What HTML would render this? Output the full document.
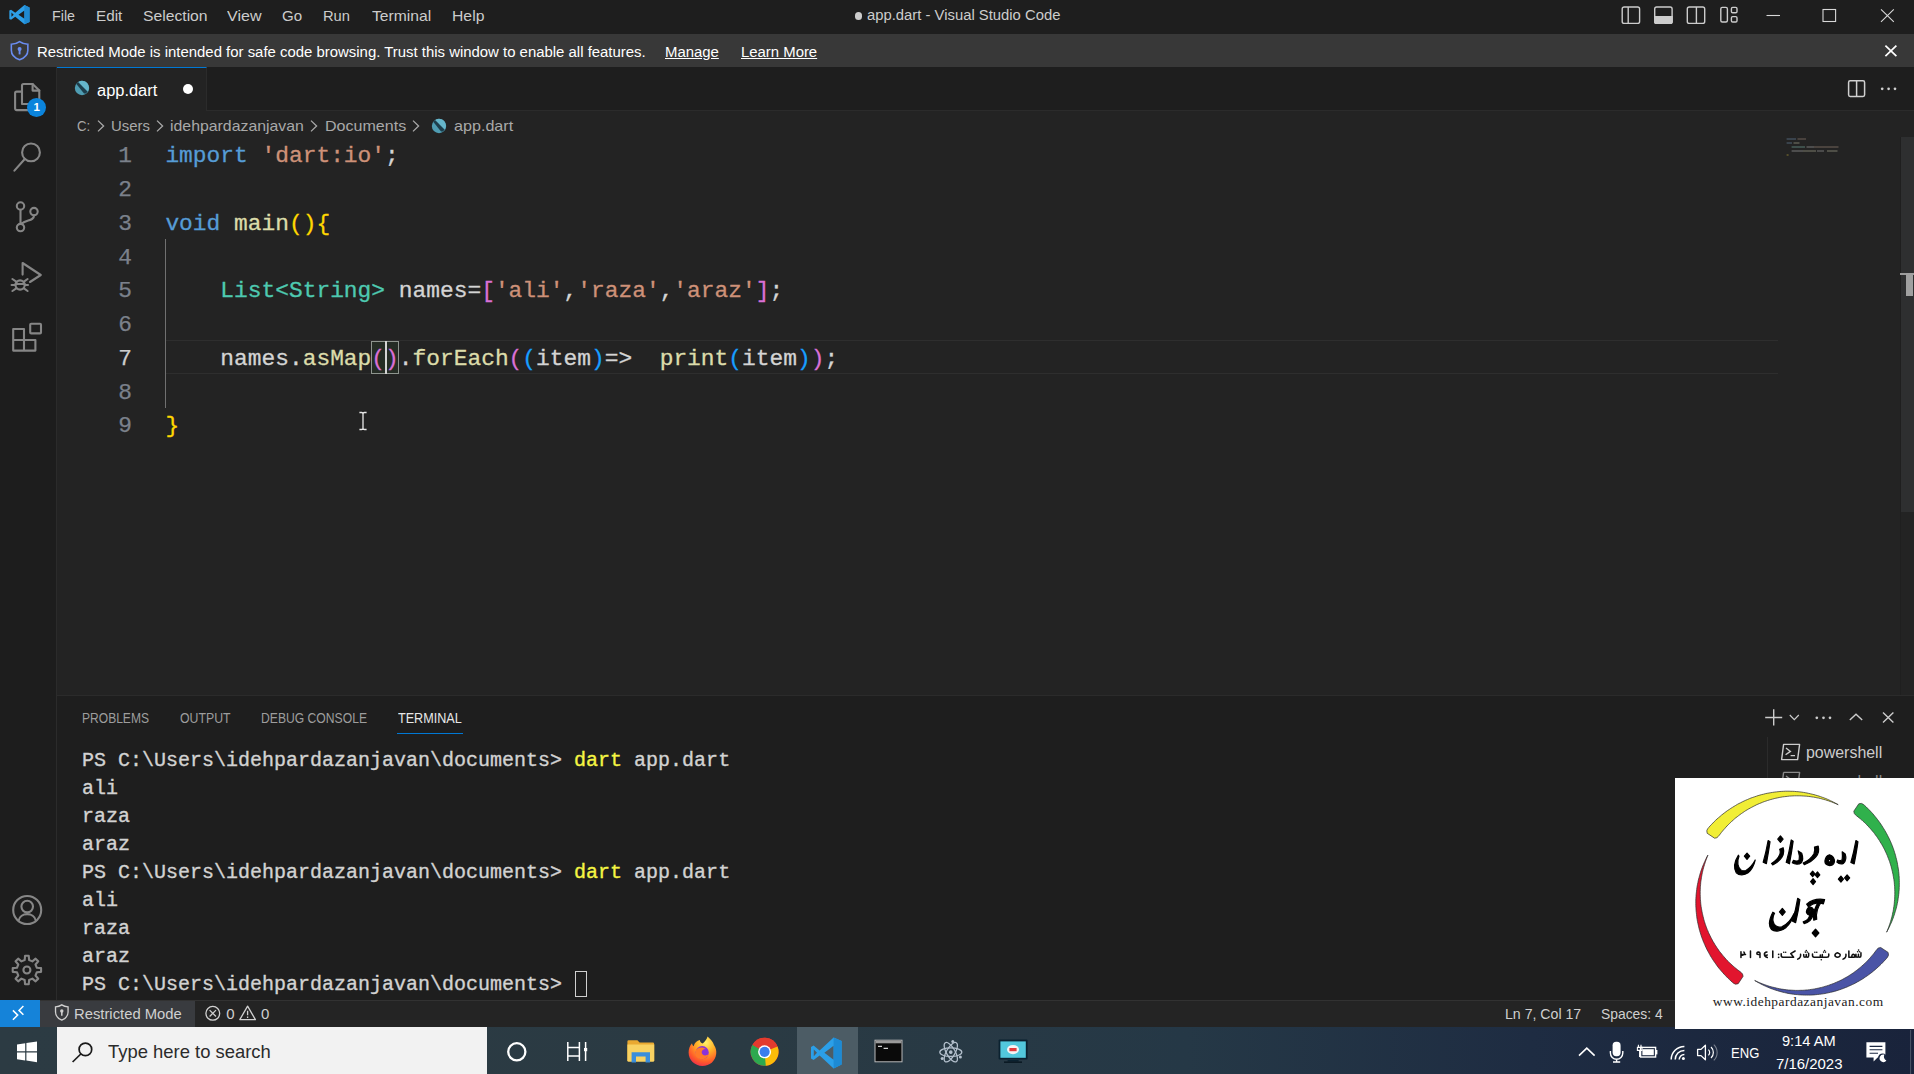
<!DOCTYPE html>
<html>
<head>
<meta charset="utf-8">
<title>app.dart - Visual Studio Code</title>
<style>
*{box-sizing:border-box;margin:0;padding:0}
html,body{width:1914px;height:1074px;overflow:hidden;background:#232323}
body{position:relative;font-family:"Liberation Sans",sans-serif;color:#cccccc}
.abs{position:absolute}
.t{position:absolute;white-space:pre;line-height:1}
/* title bar */
#titlebar{left:0;top:0;width:1914px;height:34px;background:#1e1e1e}
.menu{font-size:15px;color:#cccccc;top:8px}
/* banner */
#banner{left:0;top:34px;width:1914px;height:33px;background:#383838}
.bt{font-size:14.9px;color:#ffffff;top:44.7px}
/* activity bar */
#actbar{left:0;top:67px;width:57px;height:933px;background:#1d1d1d;border-right:1px solid #2b2b2b}
/* tabs */
#tabs{left:57px;top:67px;width:1857px;height:44px;background:#1e1e1e;border-bottom:1px solid #2b2b2b}
#tab{left:57px;top:67px;width:150px;height:44px;background:#232323;border-top:1.5px solid #0078d4;border-right:1px solid #2b2b2b}
/* editor */
#editor{left:57px;top:111px;width:1857px;height:584px;background:#232323}
.bc{font-size:15px;color:#a9a9a9;top:117.8px}
.ln{font-family:"Liberation Mono",monospace;font-size:22.85px;color:#7b818b;width:60px;text-align:right;left:72px;-webkit-text-stroke:.25px currentColor}
.code{font-family:"Liberation Mono",monospace;font-size:22.88px;color:#d4d4d4;left:165.4px;z-index:2;-webkit-text-stroke:.3px currentColor}
.k{color:#569cd6}.s{color:#ce9178}.f{color:#dcdcaa}.ty{color:#4ec9b0}
.b1{color:#ffd700}.b2{color:#da70d6}.b3{color:#179fff}
/* panel */
#panel{left:57px;top:695px;width:1857px;height:305px;background:#1e1e1e;border-top:1px solid #2b2b2b}
.pt{font-size:14.2px;color:#9d9d9d;top:710.6px}
.term{font-family:"Liberation Mono",monospace;font-size:20px;color:#d2d2d2;left:82px;-webkit-text-stroke:.35px currentColor}
.y{color:#f5f543}
/* status bar */
#status{left:0;top:1000px;width:1914px;height:27px;background:#242424;border-top:1px solid #323232}
.st{font-size:15px;color:#d0d0d0;top:1006.2px}
/* taskbar */
#taskbar{left:0;top:1027px;width:1914px;height:47px;background:linear-gradient(90deg,#2c3b43 0%,#2a3a43 40%,#253846 62%,#1e2c42 80%,#19233b 100%)}
</style>
</head>
<body>
<!-- TITLE BAR -->
<div id="titlebar" class="abs"></div>
<svg class="abs" style="left:7.6px;top:4px" width="22.9" height="21.4" viewBox="0 0 24 24" preserveAspectRatio="none"><path d="M17.2 1.2 L22.6 3.8 V20.2 L17.2 22.8 L7.6 14.2 L3.2 17.6 L1.4 16.7 V7.3 L3.2 6.4 L7.6 9.8 Z M17.2 7.4 L11 12 L17.2 16.6 Z M3.6 9.6 V14.4 L6 12 Z" fill="#2d9fe8" fill-rule="evenodd"/><path d="M17.2 1.2 L22.6 3.8 V20.2 L17.2 22.8 Z" fill="#1f8ad2"/></svg>
<span class="t menu" id="m1" style="left:51.5px;transform:scaleX(0.9515);transform-origin:0 0">File</span>
<span class="t menu" id="m2" style="left:95.8px;transform:scaleX(1.0170);transform-origin:0 0">Edit</span>
<span class="t menu" id="m3" style="left:142.8px;transform:scaleX(1.0467);transform-origin:0 0">Selection</span>
<span class="t menu" id="m4" style="left:226.8px;transform:scaleX(1.0698);transform-origin:0 0">View</span>
<span class="t menu" id="m5" style="left:281.9px;transform:scaleX(1.0042);transform-origin:0 0">Go</span>
<span class="t menu" id="m6" style="left:323.3px;transform:scaleX(0.9807);transform-origin:0 0">Run</span>
<span class="t menu" id="m7" style="left:371.6px;transform:scaleX(1.0443);transform-origin:0 0">Terminal</span>
<span class="t menu" id="m8" style="left:451.8px;transform:scaleX(1.0499);transform-origin:0 0">Help</span>
<span class="abs" style="left:854.5px;top:12.3px;width:7.4px;height:7.4px;border-radius:50%;background:#cccccc"></span>
<span class="t" id="wtitle" style="left:867px;top:8px;font-size:14.83px;color:#cccccc">app.dart - Visual Studio Code</span>
<svg class="abs" style="left:1610px;top:0" width="304" height="34" viewBox="1610 0 304 34" fill="none" stroke="#cccccc" stroke-width="1.4">
<rect x="1622.2" y="7" width="17.4" height="16.4" rx="2"/><line x1="1628.2" y1="7" x2="1628.2" y2="23.4"/>
<rect x="1654.7" y="7" width="17.4" height="16.4" rx="2"/><path d="M1654.7 16.8 H1672.1 V21.4 a2 2 0 0 1 -2 2 H1656.7 a2 2 0 0 1 -2 -2 Z" fill="#cccccc"/>
<rect x="1687.3" y="7" width="17.4" height="16.4" rx="2"/><line x1="1696.4" y1="7" x2="1696.4" y2="23.4"/>
<rect x="1720.8" y="7.4" width="6.6" height="14.6" rx="1.5"/><rect x="1731.4" y="7.4" width="5.6" height="5.4" rx="1.3"/><rect x="1731.4" y="16.6" width="5.6" height="5.4" rx="1.3"/>
<g stroke="#d8d8d8" stroke-width="1.1"><line x1="1766.5" y1="15.5" x2="1780" y2="15.5"/><rect x="1823" y="9.5" width="12.6" height="12"/><path d="M1881 9.3 L1893.8 21.8 M1893.8 9.3 L1881 21.8"/></g>
</svg>
<!-- BANNER -->
<div id="banner" class="abs"></div>
<svg class="abs" style="left:9.4px;top:40.2px" width="21.2" height="21.2" viewBox="0 0 20 20"><path d="M10 1.6 C7.6 3.4 5 4 2.2 4 V9.6 C2.2 14 5.4 17 10 18.6 C14.6 17 17.8 14 17.8 9.6 V4 C15 4 12.4 3.4 10 1.6 Z" fill="none" stroke="#6a8cf0" stroke-width="1.5"/><circle cx="10" cy="8.6" r="1.9" fill="#6a8cf0"/><rect x="9.1" y="9" width="1.8" height="4.6" fill="#6a8cf0"/></svg>
<span class="t bt" id="b1" style="left:37.2px;transform:scaleX(1.0019);transform-origin:0 0">Restricted Mode is intended for safe code browsing. Trust this window to enable all features.</span>
<span class="t bt" id="b2" style="left:665px;text-decoration:underline">Manage</span>
<span class="t bt" id="b3" style="left:741px;text-decoration:underline">Learn More</span>
<svg class="abs" style="left:1882px;top:42px" width="18" height="18" viewBox="0 0 18 18"><path d="M3.4 3.6 L14.4 14.2 M14.4 3.6 L3.4 14.2" stroke="#ffffff" stroke-width="1.7" fill="none"/></svg>
<!-- ACTIVITY BAR -->
<div id="actbar" class="abs"></div>
<svg class="abs" style="left:0;top:67px" width="57" height="320" viewBox="0 67 57 320" fill="none" stroke="#868686" stroke-width="2.1" stroke-linejoin="round" stroke-linecap="round">
<!-- files -->
<path d="M22 104 V85.5 a1.5 1.5 0 0 1 1.5 -1.5 H32.6 L39.3 90.6 V102.5 a1.5 1.5 0 0 1 -1.5 1.5 Z"/><path d="M32.6 84 V90.6 H39.3"/>
<path d="M22 91.6 H16.6 a1.5 1.5 0 0 0 -1.5 1.5 V108.6 a1.5 1.5 0 0 0 1.5 1.5 H28.5 a1.5 1.5 0 0 0 1.5 -1.5 V104"/>
<!-- search -->
<circle cx="31" cy="152.4" r="8.9"/><path d="M24.8 159 L14.4 170.6"/>
<!-- scm -->
<circle cx="20.5" cy="206" r="3.7"/><circle cx="34" cy="211.6" r="3.7"/><circle cx="20.5" cy="227.6" r="3.7"/><path d="M20.5 209.8 V223.8 M34 215.4 C34 221 27 219.5 21.6 223.6"/>
<!-- debug -->
<path d="M22.6 274.6 V263 L40.8 275 L30 282"/><circle cx="20.1" cy="285" r="4.6"/><path d="M15.6 284 H24.6 M11.6 285 H15.4 M24.8 285 H28 M12.4 279 L16.6 281.8 M27.6 279 L23.6 281.8 M12.4 291 L16.6 288.2 M27.6 291 L23.6 288.2"/>
<!-- extensions -->
<path d="M13.2 329 H24 V340 H35.4 V350.6 H13.2 Z M24 340 V350.6 M13.2 340 H24"/><rect x="30.2" y="323.8" width="10.8" height="9.6" rx="1"/>
</svg>
<span class="abs" style="left:26.8px;top:97.5px;width:19.4px;height:19.4px;border-radius:50%;background:#0b84dc"></span>
<span class="t" style="left:33.4px;top:101.6px;font-size:11.5px;font-weight:bold;color:#fff">1</span>
<svg class="abs" style="left:8px;top:890px" width="40" height="100" viewBox="8 890 40 100" fill="none" stroke="#868686" stroke-width="2.1" stroke-linejoin="round" stroke-linecap="round">
<circle cx="27.2" cy="910" r="14"/><circle cx="27.2" cy="906.6" r="5.8"/><path d="M18.6 920.6 C20 912 34.4 912 35.8 920.6"/>
<circle cx="26.9" cy="970" r="3.5"/>
<path id="gear" d="M24.67 960.05 L25.05 955.82 L28.75 955.82 L29.13 960.05 L32.36 961.39 L35.62 958.66 L38.24 961.28 L35.51 964.54 L36.85 967.77 L41.08 968.15 L41.08 971.85 L36.85 972.23 L35.51 975.46 L38.24 978.72 L35.62 981.34 L32.36 978.61 L29.13 979.95 L28.75 984.18 L25.05 984.18 L24.67 979.95 L21.44 978.61 L18.18 981.34 L15.56 978.72 L18.29 975.46 L16.95 972.23 L12.72 971.85 L12.72 968.15 L16.95 967.77 L18.29 964.54 L15.56 961.28 L18.18 958.66 L21.44 961.39 Z"/>
</svg>
<!-- TABS -->
<div id="tabs" class="abs"></div>
<div id="tab" class="abs"></div>
<svg class="abs" style="left:72.5px;top:79.2px" width="18" height="18" viewBox="0 0 18 18"><circle cx="9" cy="9" r="7.2" fill="#4f9db3"/><path d="M3.2 4.8 L5.2 2.9 L14.6 12.6 L13 14.6 L11 14.6 Z" fill="#1d3e4c"/><path d="M5.2 2.9 C8 1.2 12 1.6 14.4 4.2 C16.4 6.6 16.6 10 14.6 12.6 Z" fill="#74c6da" opacity=".6"/></svg>
<span class="t" id="tabname" style="left:97.1px;top:82.9px;font-size:15.6px;color:#ffffff;transform:scaleX(1.0536);transform-origin:0 0">app.dart</span>
<span class="abs" style="left:182.6px;top:83.6px;width:10.8px;height:10.8px;border-radius:50%;background:#ffffff"></span>
<svg class="abs" style="left:1840px;top:76px" width="70" height="26" viewBox="1840 76 70 26" fill="none" stroke="#d0d0d0" stroke-width="1.5">
<rect x="1848.6" y="80.8" width="16" height="15.6" rx="1.6"/><line x1="1856.6" y1="80.8" x2="1856.6" y2="96.4"/>
<g fill="#d0d0d0" stroke="none"><circle cx="1882.2" cy="88.8" r="1.35"/><circle cx="1888.6" cy="88.8" r="1.35"/><circle cx="1895" cy="88.8" r="1.35"/></g>
</svg>
<!-- EDITOR -->
<div id="editor" class="abs"></div>
<span class="t bc" id="c1" style="left:77.4px;transform:scaleX(0.8800);transform-origin:0 0">C:</span><svg class="abs" style="left:96px;top:118px" width="10" height="16" viewBox="0 0 10 16"><path d="M2 2.6 L7.6 8 L2 13.4" fill="none" stroke="#a9a9a9" stroke-width="1.3"/></svg>
<span class="t bc" id="c2" style="left:110.5px;transform:scaleX(0.9931);transform-origin:0 0">Users</span><svg class="abs" style="left:155px;top:118px" width="10" height="16" viewBox="0 0 10 16"><path d="M2 2.6 L7.6 8 L2 13.4" fill="none" stroke="#a9a9a9" stroke-width="1.3"/></svg>
<span class="t bc" id="c3" style="left:170.4px;transform:scaleX(1.0561);transform-origin:0 0">idehpardazanjavan</span><svg class="abs" style="left:309px;top:118px" width="10" height="16" viewBox="0 0 10 16"><path d="M2 2.6 L7.6 8 L2 13.4" fill="none" stroke="#a9a9a9" stroke-width="1.3"/></svg>
<span class="t bc" id="c4" style="left:325.2px;transform:scaleX(1.0702);transform-origin:0 0">Documents</span><svg class="abs" style="left:411px;top:118px" width="10" height="16" viewBox="0 0 10 16"><path d="M2 2.6 L7.6 8 L2 13.4" fill="none" stroke="#a9a9a9" stroke-width="1.3"/></svg>
<svg class="abs" style="left:430px;top:116.9px" width="18" height="18" viewBox="0 0 18 18"><circle cx="9" cy="9" r="7.2" fill="#4f9db3"/><path d="M3.2 4.8 L5.2 2.9 L14.6 12.6 L13 14.6 L11 14.6 Z" fill="#1d3e4c"/><path d="M5.2 2.9 C8 1.2 12 1.6 14.4 4.2 C16.4 6.6 16.6 10 14.6 12.6 Z" fill="#74c6da" opacity=".6"/></svg>
<span class="t bc" id="c5" style="left:454.2px;transform:scaleX(1.0754);transform-origin:0 0">app.dart</span>
<div class="abs" style="left:165px;top:339.6px;width:1613px;height:34.4px;border-top:1.4px solid #2e2e2e;border-bottom:1.4px solid #2e2e2e"></div>
<div class="abs" style="left:165px;top:239px;width:1.3px;height:169px;background:#707070"></div>
<span class="t ln" id="ln1" style="top:145.3px">1</span><span class="t code" id="cl1" style="top:145.3px"><span class="k">import</span> <span class="s">'dart:io'</span>;</span>
<span class="t ln" id="ln2" style="top:179.0px">2</span>
<span class="t ln" id="ln3" style="top:212.8px">3</span><span class="t code" id="cl3" style="top:212.8px"><span class="k">void</span> <span class="f">main</span><span class="b1">(){</span></span>
<span class="t ln" id="ln4" style="top:246.5px">4</span>
<span class="t ln" id="ln5" style="top:280.3px">5</span><span class="t code" id="cl5" style="top:280.3px">    <span class="ty">List&lt;String&gt;</span> names=<span class="b2">[</span><span class="s">'ali'</span>,<span class="s">'raza'</span>,<span class="s">'araz'</span><span class="b2">]</span>;</span>
<span class="t ln" id="ln6" style="top:314.0px">6</span>
<span class="t ln" id="ln7" style="top:347.7px;color:#cccccc">7</span><span class="t code" id="cl7" style="top:347.7px">    names.<span class="f">asMap</span><span class="b2">()</span>.<span class="f">forEach</span><span class="b2">(</span><span class="b3">(</span>item<span class="b3">)</span>=&gt;  <span class="f">print</span><span class="b3">(</span>item<span class="b3">)</span><span class="b2">)</span>;</span>
<span class="t ln" id="ln8" style="top:381.5px">8</span>
<span class="t ln" id="ln9" style="top:415.2px">9</span><span class="t code" id="cl9" style="top:415.2px"><span class="b1">}</span></span>

<div class="abs" style="left:370.9px;top:341px;width:15px;height:33px;border:1px solid #8e948e;background:#252c25"></div>
<div class="abs" style="left:384.9px;top:341px;width:14.4px;height:33px;border:1px solid #8e948e;background:#252c25"></div>
<div class="abs" style="left:385.1px;top:341.4px;width:2px;height:32.2px;background:#d4d4d4;z-index:3"></div>
<!-- minimap -->
<svg class="abs" style="left:1780px;top:135px" width="70" height="26" viewBox="1780 135 70 26" fill="none" stroke-width="1" opacity=".6">
<path d="M1786.600 139 H1796" stroke="#6f8fae"/><path d="M1797.500 139 H1806" stroke="#a08a7c"/>
<path d="M1786.600 143 H1792" stroke="#6f8fae"/><path d="M1793.500 143 H1799.500" stroke="#b4b49a"/>
<path d="M1791.600 147 H1805" stroke="#7fb8aa"/><path d="M1806.500 147 H1814" stroke="#b0b0b0"/><path d="M1814 147 H1838.500" stroke="#a8907f"/>
<path d="M1791.600 151 H1803" stroke="#b0b0b0"/><path d="M1803 151 H1816" stroke="#b4b49a"/><path d="M1817 151 H1824" stroke="#a8a8a8"/><path d="M1827 151 H1837.500" stroke="#b4b49a"/>
<path d="M1786.600 155 H1788.600" stroke="#c9b23c"/>
</svg>
<!-- scrollbar -->
<div class="abs" style="left:1899.6px;top:137px;width:1px;height:558px;background:#1f1f1f"></div>
<div class="abs" style="left:1901.400px;top:137.400px;width:12.600px;height:375px;background:#2e2f30"></div>
<div class="abs" style="left:1900px;top:273.200px;width:14px;height:2px;background:#9c9c9c"></div>
<div class="abs" style="left:1906.400px;top:273.200px;width:6.600px;height:22.800px;background:#a0a0a0"></div>
<!-- mouse I-beam -->
<svg class="abs" style="left:357px;top:410px" width="12" height="22" viewBox="0 0 12 22"><path d="M2.4 2.5 H4.6 Q6 2.5 6 4 Q6 2.5 7.4 2.5 H9.6 M2.4 19.5 H4.6 Q6 19.5 6 18 Q6 19.5 7.4 19.5 H9.6 M6 4 V18" fill="none" stroke="#e8e8e8" stroke-width="1.3"/></svg>
<!-- PANEL -->
<div id="panel" class="abs"></div>
<span class="t pt" id="p1" style="left:82px;transform:scaleX(0.8498);transform-origin:0 0">PROBLEMS</span>
<span class="t pt" id="p2" style="left:179.6px;transform:scaleX(0.8675);transform-origin:0 0">OUTPUT</span>
<span class="t pt" id="p3" style="left:260.8px;transform:scaleX(0.8563);transform-origin:0 0">DEBUG CONSOLE</span>
<span class="t pt" id="p4" style="left:398px;color:#e7e7e7;transform:scaleX(0.8894);transform-origin:0 0">TERMINAL</span>
<div class="abs" style="left:397px;top:732.6px;width:66px;height:1.4px;background:#0078d4"></div>
<svg class="abs" style="left:1760px;top:704px" width="150" height="28" viewBox="1760 704 150 28" fill="none" stroke="#cccccc" stroke-width="1.4">
<path d="M1765.2 717.5 H1782.2 M1773.7 709.2 V725.6"/>
<path d="M1789.8 715 L1794.3 719.6 L1798.8 715" stroke-width="1.2"/>
<g fill="#cccccc" stroke="none"><circle cx="1816.8" cy="717.8" r="1.35"/><circle cx="1823.5" cy="717.8" r="1.35"/><circle cx="1830" cy="717.8" r="1.35"/></g>
<path d="M1849.8 720 L1856 714.2 L1862.2 720"/>
<path d="M1883 712.4 L1893.4 722.4 M1893.4 712.4 L1883 722.4"/>
</svg>
<div class="abs" style="left:1767px;top:737px;width:1px;height:263px;background:#2b2b2b"></div>
<svg class="abs" style="left:1780px;top:742px" width="22" height="20" viewBox="0 0 22 20" fill="none" stroke="#cccccc" stroke-width="1.4"><path d="M3.6 2.4 H19.6 L17.6 17.6 H1.6 Z" stroke-linejoin="round"/><path d="M6 6 L10.4 9.4 L5.6 12.8 M10.6 13.6 H15"/></svg>
<span class="t" id="psh" style="left:1805.6px;top:745.4px;font-size:16px;color:#cccccc;transform:scaleX(0.9963);transform-origin:0 0">powershell</span>
<span class="t" id="psh2" style="left:1805.6px;top:773.8px;font-size:16px;color:#8a8a8a;transform:scaleX(0.9963);transform-origin:0 0">powershell</span>
<svg class="abs" style="left:1780px;top:769.6px" width="22" height="10" viewBox="0 0 22 10" fill="none" stroke="#8a8a8a" stroke-width="1.4"><path d="M3.6 2.4 H19.6 L18.6 10 M3.6 2.4 L2.6 10" stroke-linejoin="round"/><path d="M6 6 L10.4 9.4"/></svg>
<span class="t term" id="t1" style="top:751.1px">PS C:\Users\idehpardazanjavan\documents&gt; <span class="y">dart</span> app.dart</span>
<span class="t term" id="t2" style="top:779.1px">ali</span>
<span class="t term" id="t3" style="top:807.1px">raza</span>
<span class="t term" id="t4" style="top:835.1px">araz</span>
<span class="t term" id="t5" style="top:863.1px">PS C:\Users\idehpardazanjavan\documents&gt; <span class="y">dart</span> app.dart</span>
<span class="t term" id="t6" style="top:891.1px">ali</span>
<span class="t term" id="t7" style="top:919.1px">raza</span>
<span class="t term" id="t8" style="top:947.1px">araz</span>
<span class="t term" id="t9" style="top:975.1px">PS C:\Users\idehpardazanjavan\documents&gt; </span>
<div class="abs" style="left:574.5px;top:971.4px;width:12px;height:26px;border:1.2px solid #d0d0d0"></div>

<!-- STATUS -->
<div id="status" class="abs"></div>
<div class="abs" style="left:0;top:1000px;width:40px;height:27px;background:#1583d9"></div>
<svg class="abs" style="left:9px;top:1003px" width="22" height="22" viewBox="9 1003 22 22" fill="none" stroke="#ffffff" stroke-width="1.5"><path d="M23.4 1006 L19 1010.4 L23.4 1014.8"/><path d="M12.9 1010.4 L17.7 1015.1 L12.9 1019.8"/></svg>
<div class="abs" style="left:40px;top:1001px;width:154.6px;height:26px;background:#393b3f"></div>
<svg class="abs" style="left:52.6px;top:1003.4px" width="17.6" height="19" viewBox="0 0 18 20"><path d="M9 2 C7 3.4 4.8 4 2.4 4 V9.6 C2.4 13.6 5 16.4 9 18 C13 16.4 15.6 13.6 15.6 9.6 V4 C13.2 4 11 3.4 9 2 Z" fill="none" stroke="#d0d0d0" stroke-width="1.4"/><circle cx="9" cy="8.4" r="1.8" fill="#d0d0d0"/><rect x="8.2" y="9" width="1.6" height="4.4" fill="#d0d0d0"/></svg>
<span class="t st" id="s1" style="left:74.3px;transform:scaleX(0.9870);transform-origin:0 0">Restricted Mode</span>
<svg class="abs" style="left:204px;top:1004px" width="70" height="20" viewBox="204 1004 70 20" fill="none" stroke="#d0d0d0" stroke-width="1.3"><circle cx="212.8" cy="1013.3" r="6.9"/><path d="M209.6 1010.1 L216 1016.500 M216 1010.1 L209.6 1016.500"/><path d="M247.600 1006.200 L255.400 1019.600 H239.800 Z" stroke-linejoin="round"/><path d="M247.600 1010.800 V1015.200 M247.600 1016.600 V1018"/></svg>
<span class="t st" id="s2" style="left:226.2px">0</span>
<span class="t st" id="s3" style="left:260.9px">0</span>
<span class="t st" id="s4" style="left:1504.6px;transform:scaleX(0.9420);transform-origin:0 0">Ln 7, Col 17</span>
<span class="t st" id="s5" style="left:1601.2px;transform:scaleX(0.9248);transform-origin:0 0">Spaces: 4</span>

<!-- TASKBAR -->
<div id="taskbar" class="abs"></div>
<svg class="abs" style="left:0;top:1027px" width="57" height="47" viewBox="0 1027 57 47"><g fill="#ffffff"><path d="M17 1044.4 L25.2 1043.2 V1051.2 H17 Z"/><path d="M26.4 1043 L37 1041.4 V1051.2 H26.4 Z"/><path d="M17 1052.4 H25.2 V1060.4 L17 1059.2 Z"/><path d="M26.4 1052.4 H37 V1062.2 L26.4 1060.6 Z"/></g></svg>
<div class="abs" style="left:57px;top:1027px;width:430px;height:47px;background:#f2f2f2"></div>
<svg class="abs" style="left:68px;top:1038px" width="30" height="28" viewBox="68 1038 30 28" fill="none" stroke="#1a1a1a" stroke-width="1.7"><circle cx="85.4" cy="1049.4" r="6.3"/><path d="M80.8 1054 L72.6 1062"/></svg>
<span class="t" id="srch" style="left:107.6px;top:1042.4px;font-size:19px;color:#2b2b2b;transform:scaleX(0.9694);transform-origin:0 0">Type here to search</span>
<svg class="abs" style="left:487px;top:1027px" width="560" height="47" viewBox="487 1027 560 47">
<circle cx="516.8" cy="1051.8" r="8.6" fill="none" stroke="#ffffff" stroke-width="2.3"/>
<g fill="none" stroke="#ffffff" stroke-width="1.5"><path d="M567.8 1042 V1061 M579.4 1042 V1061 M567.8 1047.6 H579.4 M567.8 1056 H579.4 M585.6 1042 V1061"/><rect x="584" y="1048" width="3.2" height="3.2" fill="#ffffff" stroke="none"/></g>
<!-- explorer -->
<path d="M627.4 1041.6 a1.4 1.4 0 0 1 1.4 -1.4 H637.4 L639.6 1042.6 H652.8 a1.4 1.4 0 0 1 1.4 1.4 V1061 H627.4 Z" fill="#e9a931"/>
<path d="M627.4 1044.6 H654.2 V1060.6 a1.2 1.2 0 0 1 -1.2 1.2 H628.6 a1.2 1.2 0 0 1 -1.2 -1.2 Z" fill="#f8d262"/>
<path d="M631.6 1052.2 H650 V1062.4 H645.6 V1056.6 H636 V1062.4 H631.6 Z" fill="#3a8edb"/>
<!-- firefox -->
<defs><radialGradient id="ffg" cx="0.62" cy="0.2" r="0.95"><stop offset="0" stop-color="#fff36b"/><stop offset=".35" stop-color="#ffb127"/><stop offset=".7" stop-color="#ff5a2a"/><stop offset="1" stop-color="#e3175f"/></radialGradient></defs>
<path d="M707.6 1036.6 C711 1039.6 713 1042 714 1045 C716 1048 716.6 1051 716.2 1054 C715.4 1061 709.8 1066 702.4 1066 C694.6 1066 688.6 1060 688.6 1052.6 C688.6 1049 689.8 1045.6 692 1043.2 C692.2 1044.6 692.8 1045.6 693.6 1046.2 C694.6 1042.6 697 1040.6 699.8 1040 C700 1041.6 701 1043 702.6 1043.6 C704.6 1042 706.6 1039.6 707.6 1036.6 Z" fill="url(#ffg)"/>
<circle cx="702.2" cy="1052.6" r="6.6" fill="#8a33d8"/><path d="M696 1050 C698 1047 703 1046.6 706 1049 C703 1049 701 1051 702 1053.6 C703 1056 706.6 1056 708.6 1054 C707.6 1059 701 1061 697 1057.6 C695 1055.6 694.8 1052.6 696 1050 Z" fill="#ff7a2a"/>
<!-- chrome -->
<circle cx="764.6" cy="1051.8" r="14" fill="#e33b2e"/>
<path d="M764.6 1051.8 L752.5 1044.8 A14 14 0 0 0 765.8 1065.75 L771.6 1055.8 Z" fill="#2da94f"/>
<path d="M764.6 1051.8 L765.8 1065.75 A14 14 0 0 0 777.5 1046.4 H764.6 Z" fill="#fbbc09"/>
<path d="M764.6 1051.8 L777.5 1046.4 A14 14 0 0 0 752.5 1044.8 Z" fill="#e33b2e"/>
<circle cx="764.6" cy="1051.8" r="6.5" fill="#ffffff"/><circle cx="764.6" cy="1051.8" r="5.1" fill="#3b7ded"/>
<!-- vscode active -->
<rect x="797" y="1027" width="61" height="47" fill="#4c5c65"/>
<path d="M833.6 1037.4 L841.6 1041 V1064.6 L833.6 1068.4 L819.6 1055.4 L813.6 1060 L811 1058.6 V1047 L813.6 1045.6 L819.6 1050.4 Z M833.6 1045.8 L824.4 1052.8 L833.6 1059.8 Z M813.8 1049.6 V1056.2 L817 1052.8 Z" fill="#2b9fe8" fill-rule="evenodd"/><path d="M833.6 1037.4 L841.6 1041 V1064.6 L833.6 1068.4 Z" fill="#1d8ad4"/>
<!-- cmd -->
<rect x="875" y="1040.2" width="27" height="21.6" fill="#0a0a0a" stroke="#b9b9b9" stroke-width="1"/><rect x="875.5" y="1040.7" width="26" height="2.6" fill="#9a9a9a"/><path d="M878 1046.4 H882 M883.6 1048.4 H888" stroke="#d0d0d0" stroke-width="1.1"/>
<!-- atom -->
<g fill="none" stroke="#b4c0cd" stroke-width="1.25" transform="translate(950.8 1052.2)"><ellipse rx="11" ry="4.3"/><ellipse rx="11" ry="4.3" transform="rotate(60)"/><ellipse rx="11" ry="4.3" transform="rotate(120)"/><circle r="1.2" fill="#b4c0cd"/><circle cx="2" cy="-10.6" r="1.5" fill="#b4c0cd" stroke="none"/><circle cx="-8.6" cy="6.4" r="1.5" fill="#b4c0cd" stroke="none"/><circle cx="9.6" cy="4.8" r="1.5" fill="#b4c0cd" stroke="none"/></g>
<!-- monitor rec -->
<rect x="998.6" y="1039.6" width="29" height="20" rx="1" fill="#0b2230"/><rect x="1000.4" y="1041.4" width="25.4" height="16.4" fill="#52c8dc"/><rect x="1007.6" y="1060" width="11" height="1.6" fill="#0b2230"/><rect x="1004" y="1061.4" width="18" height="1.6" fill="#0b1a24"/>
<ellipse cx="1013" cy="1049.6" rx="6" ry="4.6" fill="#f4f4f4"/><rect x="1009.4" y="1048" width="7.2" height="3.2" fill="#e23a3a"/>
</svg>
<!-- tray -->
<svg class="abs" style="left:1570px;top:1030px" width="344" height="44" viewBox="1570 1030 344 44" fill="none" stroke="#ffffff" stroke-width="1.4">
<path d="M1579 1055.6 L1586.8 1048.2 L1594.6 1055.6" stroke-width="1.6"/>
<rect x="1612.6" y="1041.8" width="8" height="14.4" rx="3.6" fill="#ffffff" stroke="none"/><path d="M1610.4 1051 V1053 a6.2 6.2 0 0 0 12.4 0 V1051 M1616.6 1059.2 V1062 M1613 1062 H1620.2"/>
<rect x="1640.6" y="1047.4" width="15" height="9.6" fill="none"/><rect x="1642.4" y="1049.2" width="11.4" height="6" fill="#ffffff" stroke="none"/><rect x="1655.6" y="1050" width="1.8" height="4.4" fill="#ffffff" stroke="none"/><path d="M1638.4 1044.8 V1047 M1641 1044.8 V1047 M1637.4 1047.4 H1642 V1050.4 H1637.4 Z M1639.6 1050.6 V1057" stroke-width="1.1"/>
<path d="M1671.2 1059.6 A13.2 13.2 0 0 1 1684.4 1046.4 M1675.2 1059.6 A9.2 9.2 0 0 1 1684.4 1050.4 M1679.2 1059.6 A5.2 5.2 0 0 1 1684.4 1054.4" stroke-width="1.5"/><circle cx="1683.4" cy="1058.6" r="1.5" fill="#ffffff" stroke="none"/>
<path d="M1697.6 1049.4 H1701 L1705.4 1045.2 V1059.8 L1701 1055.6 H1697.6 Z" stroke-linejoin="round" stroke-width="1.3"/><path d="M1708.4 1049.6 a4 4 0 0 1 0 5.8 M1711 1047 a7.6 7.6 0 0 1 0 11" stroke-width="1.2"/><path d="M1713.8 1044.6 a11 11 0 0 1 0 15.8" stroke-width="1.1" opacity=".4"/>
<path d="M1866.4 1042.2 H1885.4 V1057.6 H1877.6 L1873.6 1061.6 V1057.6 H1866.4 Z" fill="#ffffff" stroke="none"/><path d="M1869.6 1046.4 H1882.4 M1869.6 1049.8 H1882.4 M1869.6 1053.2 H1878" stroke="#1b2740" stroke-width="1.1"/><circle cx="1882.6" cy="1058" r="4.6" fill="#1b2740" stroke="none"/><path d="M1884.4 1054.6 a3.8 3.8 0 1 0 2 6 a4.4 4.4 0 0 1 -2 -6 Z" fill="#ffffff" stroke="none"/>
<path d="M1910.6 1030 V1074" stroke="#4a5568" stroke-width="1"/>
</svg>
<span class="t" id="eng" style="left:1730.5px;top:1045.5px;font-size:14.6px;color:#ffffff;transform:scaleX(0.8949);transform-origin:0 0">ENG</span>
<span class="t" id="tm1" style="left:1782px;top:1033.6px;font-size:14.6px;color:#ffffff;transform:scaleX(1.0010);transform-origin:0 0">9:14 AM</span>
<span class="t" id="tm2" style="left:1775.5px;top:1057.2px;font-size:14.6px;color:#ffffff;transform:scaleX(1.0241);transform-origin:0 0">7/16/2023</span>

<!-- LOGO -->
<div id="logo" class="abs" style="left:1674.6px;top:777.8px;width:239.4px;height:251.6px;background:#ffffff"></div>
<svg class="abs" style="left:1675px;top:778px" width="239" height="250" viewBox="1675 778 239 250">
<path d="M1707.2 833.3 L1706.8 830.7 L1707.6 828.9 L1708.8 827.4 L1710.1 825.9 L1711.5 824.5 L1712.8 823.1 L1714.2 821.7 L1715.6 820.3 L1717.0 819.0 L1718.5 817.7 L1720.0 816.5 L1721.4 815.2 L1723.0 814.0 L1724.5 812.8 L1726.0 811.7 L1727.6 810.5 L1729.2 809.5 L1730.8 808.4 L1732.4 807.4 L1734.0 806.4 L1735.7 805.4 L1737.3 804.4 L1739.0 803.5 L1740.7 802.7 L1742.4 801.8 L1744.1 801.0 L1745.8 800.2 L1747.5 799.5 L1749.3 798.7 L1751.0 798.0 L1752.8 797.4 L1754.6 796.8 L1756.4 796.2 L1758.1 795.6 L1759.9 795.1 L1761.7 794.6 L1763.5 794.2 L1765.3 793.7 L1767.2 793.3 L1769.0 793.0 L1770.8 792.7 L1772.6 792.4 L1774.5 792.1 L1776.3 791.9 L1778.1 791.7 L1779.9 791.5 L1781.8 791.4 L1783.6 791.3 L1785.4 791.2 L1787.2 791.2 L1789.1 791.2 L1790.9 791.3 L1792.7 791.3 L1794.5 791.4 L1796.3 791.6 L1798.1 791.7 L1799.9 791.9 L1801.7 792.1 L1803.5 792.4 L1805.2 792.7 L1807.0 793.0 L1808.7 793.4 L1810.5 793.8 L1812.2 794.2 L1813.9 794.6 L1815.6 795.1 L1817.3 795.6 L1819.0 796.1 L1820.7 796.7 L1822.4 797.3 L1824.0 797.9 L1825.7 798.5 L1827.3 799.2 L1828.9 799.9 L1830.5 800.7 L1832.0 801.4 L1833.6 802.2 L1835.1 803.0 L1836.7 803.8 L1838.2 804.7 L1838.2 804.7 L1836.6 804.0 L1835.0 803.3 L1833.4 802.7 L1831.8 802.0 L1830.2 801.5 L1828.6 800.9 L1826.9 800.4 L1825.3 799.8 L1823.6 799.4 L1821.9 798.9 L1820.3 798.5 L1818.6 798.1 L1816.9 797.8 L1815.2 797.4 L1813.5 797.1 L1811.8 796.9 L1810.1 796.6 L1808.4 796.4 L1806.7 796.2 L1805.0 796.1 L1803.2 796.0 L1801.5 795.9 L1799.8 795.8 L1798.1 795.8 L1796.4 795.8 L1794.6 795.8 L1792.9 795.9 L1791.2 796.0 L1789.5 796.1 L1787.8 796.3 L1786.0 796.5 L1784.3 796.7 L1782.6 796.9 L1780.9 797.2 L1779.2 797.5 L1777.5 797.9 L1775.9 798.2 L1774.2 798.6 L1772.5 799.1 L1770.8 799.5 L1769.2 800.0 L1767.5 800.5 L1765.9 801.1 L1764.3 801.6 L1762.7 802.2 L1761.1 802.9 L1759.5 803.5 L1757.9 804.2 L1756.3 804.9 L1754.8 805.7 L1753.2 806.5 L1751.7 807.3 L1750.2 808.1 L1748.7 808.9 L1747.2 809.8 L1745.7 810.7 L1744.3 811.6 L1742.9 812.6 L1741.4 813.6 L1740.0 814.6 L1738.7 815.6 L1737.3 816.7 L1735.9 817.7 L1734.6 818.8 L1733.3 820.0 L1732.0 821.1 L1730.8 822.3 L1729.5 823.5 L1728.3 824.7 L1727.1 825.9 L1725.9 827.2 L1724.8 828.5 L1723.6 829.8 L1722.5 831.1 L1721.4 832.4 L1720.4 833.8 L1719.3 835.2 L1718.2 836.5 L1716.9 837.7 L1714.6 838.2 Z" fill="#f1ee36" stroke="#2a2a2a" stroke-width="0.7" stroke-linejoin="round"/>
<path d="M1858.8 803.8 L1861.4 803.4 L1863.2 804.3 L1864.7 805.5 L1866.1 806.8 L1867.4 808.1 L1868.8 809.5 L1870.1 810.8 L1871.4 812.2 L1872.7 813.6 L1873.9 815.1 L1875.1 816.5 L1876.3 818.0 L1877.5 819.5 L1878.6 821.0 L1879.7 822.5 L1880.8 824.1 L1881.8 825.6 L1882.8 827.2 L1883.8 828.8 L1884.8 830.4 L1885.7 832.0 L1886.6 833.6 L1887.5 835.3 L1888.3 836.9 L1889.2 838.6 L1889.9 840.2 L1890.7 841.9 L1891.4 843.6 L1892.1 845.3 L1892.8 847.1 L1893.4 848.8 L1894.0 850.5 L1894.5 852.2 L1895.1 854.0 L1895.6 855.7 L1896.0 857.5 L1896.5 859.3 L1896.9 861.0 L1897.3 862.8 L1897.6 864.6 L1897.9 866.4 L1898.2 868.1 L1898.5 869.9 L1898.7 871.7 L1898.9 873.5 L1899.0 875.3 L1899.2 877.1 L1899.2 878.8 L1899.3 880.6 L1899.3 882.4 L1899.3 884.2 L1899.3 885.9 L1899.2 887.7 L1899.2 889.5 L1899.0 891.2 L1898.9 893.0 L1898.7 894.7 L1898.5 896.5 L1898.2 898.2 L1898.0 899.9 L1897.7 901.7 L1897.3 903.4 L1897.0 905.1 L1896.6 906.8 L1896.2 908.5 L1895.7 910.1 L1895.2 911.8 L1894.7 913.4 L1894.2 915.1 L1893.6 916.7 L1893.1 918.3 L1892.4 919.9 L1891.8 921.5 L1891.1 923.1 L1890.4 924.6 L1889.7 926.2 L1889.0 927.7 L1888.2 929.2 L1887.4 930.7 L1886.6 932.2 L1886.6 932.2 L1887.3 930.7 L1887.9 929.1 L1888.5 927.5 L1889.1 926.0 L1889.6 924.4 L1890.2 922.8 L1890.7 921.2 L1891.1 919.6 L1891.6 917.9 L1892.0 916.3 L1892.4 914.7 L1892.7 913.0 L1893.1 911.4 L1893.4 909.7 L1893.6 908.1 L1893.9 906.4 L1894.1 904.7 L1894.3 903.1 L1894.4 901.4 L1894.6 899.7 L1894.7 898.0 L1894.7 896.4 L1894.8 894.7 L1894.8 893.0 L1894.8 891.3 L1894.7 889.6 L1894.7 888.0 L1894.6 886.3 L1894.4 884.6 L1894.3 882.9 L1894.1 881.3 L1893.9 879.6 L1893.6 877.9 L1893.3 876.3 L1893.0 874.6 L1892.7 873.0 L1892.3 871.3 L1891.9 869.7 L1891.5 868.1 L1891.1 866.4 L1890.6 864.8 L1890.1 863.2 L1889.6 861.6 L1889.0 860.0 L1888.4 858.5 L1887.8 856.9 L1887.2 855.3 L1886.5 853.8 L1885.8 852.3 L1885.1 850.8 L1884.4 849.2 L1883.6 847.8 L1882.8 846.3 L1882.0 844.8 L1881.1 843.4 L1880.2 841.9 L1879.4 840.5 L1878.4 839.1 L1877.5 837.7 L1876.5 836.3 L1875.5 835.0 L1874.5 833.6 L1873.5 832.3 L1872.4 831.0 L1871.3 829.7 L1870.2 828.4 L1869.1 827.2 L1867.9 826.0 L1866.8 824.8 L1865.6 823.6 L1864.4 822.4 L1863.1 821.3 L1861.9 820.1 L1860.6 819.0 L1859.3 818.0 L1858.0 816.9 L1856.7 815.9 L1855.4 814.8 L1854.3 813.5 L1853.8 811.2 Z" fill="#30b14c" stroke="#2a2a2a" stroke-width="0.7" stroke-linejoin="round"/>
<path d="M1888.1 952.4 L1888.5 955.1 L1887.7 956.9 L1886.5 958.5 L1885.1 960.0 L1883.8 961.4 L1882.4 962.9 L1881.0 964.3 L1879.6 965.7 L1878.1 967.0 L1876.6 968.4 L1875.1 969.7 L1873.6 970.9 L1872.1 972.2 L1870.5 973.4 L1868.9 974.6 L1867.4 975.7 L1865.7 976.8 L1864.1 977.9 L1862.5 979.0 L1860.8 980.0 L1859.1 981.0 L1857.4 981.9 L1855.7 982.9 L1854.0 983.8 L1852.3 984.6 L1850.5 985.4 L1848.7 986.2 L1847.0 987.0 L1845.2 987.7 L1843.4 988.4 L1841.6 989.1 L1839.8 989.7 L1838.0 990.3 L1836.1 990.9 L1834.3 991.4 L1832.5 991.9 L1830.6 992.3 L1828.8 992.7 L1826.9 993.1 L1825.1 993.5 L1823.2 993.8 L1821.3 994.1 L1819.5 994.3 L1817.6 994.5 L1815.7 994.7 L1813.9 994.9 L1812.0 995.0 L1810.1 995.1 L1808.3 995.1 L1806.4 995.1 L1804.5 995.1 L1802.7 995.0 L1800.8 994.9 L1799.0 994.8 L1797.2 994.6 L1795.3 994.5 L1793.5 994.2 L1791.7 994.0 L1789.9 993.7 L1788.1 993.4 L1786.3 993.0 L1784.5 992.6 L1782.7 992.2 L1781.0 991.7 L1779.2 991.3 L1777.5 990.7 L1775.7 990.2 L1774.0 989.6 L1772.3 989.0 L1770.6 988.4 L1769.0 987.7 L1767.3 987.0 L1765.7 986.3 L1764.1 985.6 L1762.5 984.8 L1760.9 984.0 L1759.3 983.1 L1757.7 982.3 L1756.2 981.4 L1754.7 980.5 L1754.7 980.5 L1756.3 981.2 L1757.9 982.0 L1759.5 982.7 L1761.1 983.3 L1762.8 984.0 L1764.4 984.6 L1766.1 985.2 L1767.7 985.7 L1769.4 986.3 L1771.1 986.8 L1772.8 987.2 L1774.5 987.6 L1776.2 988.0 L1777.9 988.4 L1779.7 988.8 L1781.4 989.1 L1783.1 989.3 L1784.9 989.6 L1786.6 989.8 L1788.4 990.0 L1790.1 990.1 L1791.9 990.2 L1793.7 990.3 L1795.4 990.4 L1797.2 990.4 L1798.9 990.4 L1800.7 990.3 L1802.4 990.3 L1804.2 990.2 L1806.0 990.0 L1807.7 989.9 L1809.5 989.7 L1811.2 989.4 L1812.9 989.2 L1814.7 988.9 L1816.4 988.5 L1818.1 988.2 L1819.8 987.8 L1821.6 987.4 L1823.3 986.9 L1824.9 986.4 L1826.6 985.9 L1828.3 985.4 L1830.0 984.8 L1831.6 984.2 L1833.3 983.6 L1834.9 982.9 L1836.5 982.2 L1838.1 981.5 L1839.7 980.8 L1841.3 980.0 L1842.9 979.2 L1844.4 978.3 L1845.9 977.5 L1847.5 976.6 L1849.0 975.7 L1850.4 974.7 L1851.9 973.8 L1853.4 972.8 L1854.8 971.7 L1856.2 970.7 L1857.6 969.6 L1859.0 968.5 L1860.3 967.4 L1861.7 966.2 L1863.0 965.1 L1864.3 963.9 L1865.5 962.7 L1866.8 961.4 L1868.0 960.2 L1869.2 958.9 L1870.4 957.6 L1871.5 956.2 L1872.7 954.9 L1873.8 953.5 L1874.9 952.1 L1875.9 950.7 L1877.0 949.3 L1878.3 948.1 L1880.7 947.5 Z" fill="#4a54a6" stroke="#2a2a2a" stroke-width="0.7" stroke-linejoin="round"/>
<path d="M1738.2 983.7 L1735.6 984.2 L1733.8 983.4 L1732.3 982.2 L1730.9 980.9 L1729.5 979.6 L1728.1 978.3 L1726.7 976.9 L1725.4 975.5 L1724.1 974.2 L1722.8 972.7 L1721.5 971.3 L1720.3 969.8 L1719.1 968.4 L1717.9 966.9 L1716.8 965.4 L1715.7 963.8 L1714.6 962.3 L1713.5 960.7 L1712.5 959.2 L1711.5 957.6 L1710.5 956.0 L1709.6 954.3 L1708.7 952.7 L1707.8 951.1 L1706.9 949.4 L1706.1 947.7 L1705.3 946.0 L1704.6 944.3 L1703.8 942.6 L1703.1 940.9 L1702.5 939.2 L1701.8 937.5 L1701.2 935.7 L1700.7 934.0 L1700.1 932.2 L1699.6 930.5 L1699.1 928.7 L1698.7 926.9 L1698.3 925.1 L1697.9 923.4 L1697.5 921.6 L1697.2 919.8 L1696.9 918.0 L1696.7 916.2 L1696.5 914.4 L1696.3 912.6 L1696.1 910.8 L1696.0 909.0 L1695.9 907.2 L1695.8 905.4 L1695.8 903.7 L1695.8 901.9 L1695.8 900.1 L1695.9 898.3 L1696.0 896.5 L1696.1 894.8 L1696.3 893.0 L1696.5 891.2 L1696.7 889.5 L1696.9 887.7 L1697.2 886.0 L1697.5 884.3 L1697.9 882.6 L1698.2 880.8 L1698.6 879.1 L1699.1 877.4 L1699.5 875.8 L1700.0 874.1 L1700.5 872.4 L1701.0 870.8 L1701.6 869.2 L1702.2 867.5 L1702.8 865.9 L1703.5 864.3 L1704.2 862.7 L1704.9 861.2 L1705.6 859.6 L1706.3 858.1 L1707.1 856.6 L1707.9 855.1 L1707.9 855.1 L1707.3 856.6 L1706.7 858.2 L1706.1 859.8 L1705.5 861.4 L1705.0 863.0 L1704.5 864.6 L1704.0 866.3 L1703.5 867.9 L1703.1 869.5 L1702.7 871.2 L1702.3 872.8 L1702.0 874.5 L1701.7 876.1 L1701.4 877.8 L1701.2 879.5 L1700.9 881.2 L1700.7 882.9 L1700.6 884.5 L1700.4 886.2 L1700.3 887.9 L1700.3 889.6 L1700.2 891.3 L1700.2 893.0 L1700.2 894.7 L1700.3 896.4 L1700.3 898.1 L1700.4 899.8 L1700.6 901.5 L1700.7 903.1 L1700.9 904.8 L1701.1 906.5 L1701.4 908.2 L1701.7 909.9 L1702.0 911.5 L1702.3 913.2 L1702.7 914.8 L1703.1 916.5 L1703.5 918.1 L1703.9 919.8 L1704.4 921.4 L1704.9 923.0 L1705.4 924.6 L1706.0 926.2 L1706.6 927.8 L1707.2 929.4 L1707.9 930.9 L1708.5 932.5 L1709.2 934.0 L1710.0 935.6 L1710.7 937.1 L1711.5 938.6 L1712.3 940.1 L1713.1 941.6 L1714.0 943.0 L1714.9 944.5 L1715.8 945.9 L1716.7 947.3 L1717.7 948.7 L1718.6 950.1 L1719.6 951.5 L1720.7 952.8 L1721.7 954.1 L1722.8 955.4 L1723.9 956.7 L1725.0 958.0 L1726.1 959.3 L1727.3 960.5 L1728.5 961.7 L1729.7 962.9 L1730.9 964.1 L1732.2 965.2 L1733.4 966.3 L1734.7 967.4 L1736.0 968.5 L1737.3 969.6 L1738.7 970.6 L1740.0 971.6 L1741.4 972.7 L1742.5 974.0 L1743.1 976.3 Z" fill="#e2152e" stroke="#2a2a2a" stroke-width="0.7" stroke-linejoin="round"/>
</svg>
<svg class="abs" style="left:1724px;top:830px" width="150" height="115" viewBox="0 0 1401 1074" fill="#000" stroke="#000" stroke-width="11" stroke-linejoin="round">
<!-- line 1 -->
<path d="M135 235 C100 290 88 355 115 400 C140 425 190 425 225 400 C262 370 282 325 292 280 C272 318 245 352 205 378 C170 390 138 370 130 320 C128 290 132 262 140 245 Z"/>
<path d="M215 215 L240 245 L215 275 L190 245 Z"/>
<path d="M412 98 L430 110 C420 180 408 250 396 314 L366 300 C386 232 400 165 412 98 Z"/>
<path d="M527 55 L552 85 L527 115 L502 85 Z"/>
<path d="M520 180 L552 165 C562 200 556 232 540 255 C515 290 485 312 455 327 L444 312 C480 290 510 258 522 225 C528 208 526 195 520 180 Z"/>
<path d="M628 93 L646 104 C636 180 624 250 611 316 L581 302 C602 232 616 165 628 93 Z"/>
<path d="M693 195 L726 216 C738 250 738 285 722 306 C700 324 662 322 638 306 L648 284 C672 294 694 292 702 278 C708 252 702 222 693 195 Z"/>
<path d="M845 160 L880 150 C890 190 880 225 860 248 C830 285 790 308 750 324 L739 308 C785 288 822 255 840 222 C850 200 850 180 845 160 Z"/>
<path d="M828 384 L850 410 L828 436 L806 410 Z M873 392 L895 418 L873 444 L851 418 Z M832 455 L855 482 L832 509 L809 482 Z"/>
<path d="M985 232 C1032 246 1048 300 1012 326 C976 342 938 322 943 285 C948 255 964 238 985 232 Z M985 272 C974 280 972 294 985 298 C999 298 1004 286 985 272 Z" fill-rule="evenodd"/>
<path d="M1104 203 L1132 224 C1142 256 1138 292 1116 312 C1096 320 1070 314 1054 300 L1062 280 C1080 290 1098 288 1104 272 C1108 250 1106 226 1104 203 Z"/>
<path d="M1092 430 L1116 458 L1092 486 L1068 458 Z M1150 420 L1174 448 L1150 476 L1126 448 Z"/>
<path d="M1232 98 L1251 109 C1242 180 1229 250 1216 316 L1185 302 C1205 232 1220 165 1232 98 Z"/>
<!-- line 2 -->
<path d="M456 768 C424 830 410 892 444 930 C476 955 540 945 580 910 C618 875 642 830 652 784 C630 832 592 880 540 905 C500 915 466 892 458 850 C454 822 462 795 472 778 Z"/>
<path d="M545 733 L572 765 L545 797 L518 765 Z"/>
<path d="M688 638 L709 651 C700 722 686 795 669 866 L637 850 C660 780 677 710 688 638 Z"/>
<path d="M800 718 C838 722 852 760 832 790 C824 832 792 862 748 874 L740 858 C775 846 796 822 800 796 C775 792 764 766 774 744 C780 730 790 722 800 718 Z M800 748 C792 754 792 764 800 766 C808 764 808 754 800 748 Z" fill-rule="evenodd"/>
<path d="M772 692 C820 652 882 640 940 650 L928 690 C882 674 832 682 788 716 Z"/>
<path d="M912 668 C875 720 856 772 866 834 L838 842 C826 772 852 714 890 660 Z"/>
<path d="M855 926 L886 962 L855 998 L824 962 Z"/>
</svg>
<svg class="abs" style="left:1730px;top:940px" width="140" height="72" viewBox="0 0 1914 984" fill="none" stroke="#111" stroke-width="21" stroke-linecap="round" stroke-linejoin="round">
<!-- shomareh -->
<path d="M1790 175 V215 Q1790 235 1772 235 Q1756 235 1756 215 V195 M1756 215 Q1756 235 1738 235 Q1722 235 1722 215 V195 M1722 225 Q1715 235 1690 235 H1650 M1700 235 Q1715 200 1685 196 Q1660 200 1668 235 M1650 235 H1625 V150 M1585 195 Q1592 240 1545 262 M1480 180 Q1520 190 1500 225 Q1470 245 1440 225 Q1425 200 1455 180 Q1470 172 1480 180"/>
<!-- sabt -->
<path d="M1350 190 V215 Q1350 235 1325 235 H1262 V200 M1262 235 H1235 V205 M1235 235 H1150 Q1128 235 1128 210 V190"/>
<!-- sherkat -->
<path d="M1075 180 V215 Q1075 235 1058 235 Q1042 235 1042 215 V198 M1042 215 Q1042 235 1025 235 Q1008 235 1008 215 V198 M965 195 Q972 240 925 262 M890 150 L830 185 L870 235 H722 Q700 235 700 210 V188"/>
<!-- colon + digits -->
<path d="M585 150 V240 M505 165 Q470 170 470 195 Q475 215 510 205 M472 195 Q465 225 510 240 M410 195 Q415 165 388 165 Q365 168 368 192 Q380 205 410 195 V240 M280 150 V240 M150 160 V240 M150 200 Q175 215 195 195 Q205 180 190 165 M150 198 H212"/>
<g fill="#111" stroke="none"><circle cx="1745" cy="160" r="11"/><circle cx="1772" cy="160" r="11"/><circle cx="1758" cy="138" r="11"/>
<circle cx="1280" cy="165" r="11"/><circle cx="1306" cy="165" r="11"/><circle cx="1293" cy="143" r="11"/><circle cx="1248" cy="270" r="11"/><circle cx="1160" cy="168" r="11"/><circle cx="1186" cy="168" r="11"/>
<circle cx="1030" cy="165" r="11"/><circle cx="1056" cy="165" r="11"/><circle cx="1043" cy="143" r="11"/><circle cx="735" cy="168" r="11"/><circle cx="761" cy="168" r="11"/>
<circle cx="665" cy="195" r="12"/><circle cx="665" cy="236" r="12"/></g>
</svg>
<span class="t" id="url" style="left:1712.8px;top:994.6px;font-family:'Liberation Serif',serif;font-size:13.4px;letter-spacing:.5px;color:#1a1a1a">www.idehpardazanjavan.com</span>
</body>
</html>
